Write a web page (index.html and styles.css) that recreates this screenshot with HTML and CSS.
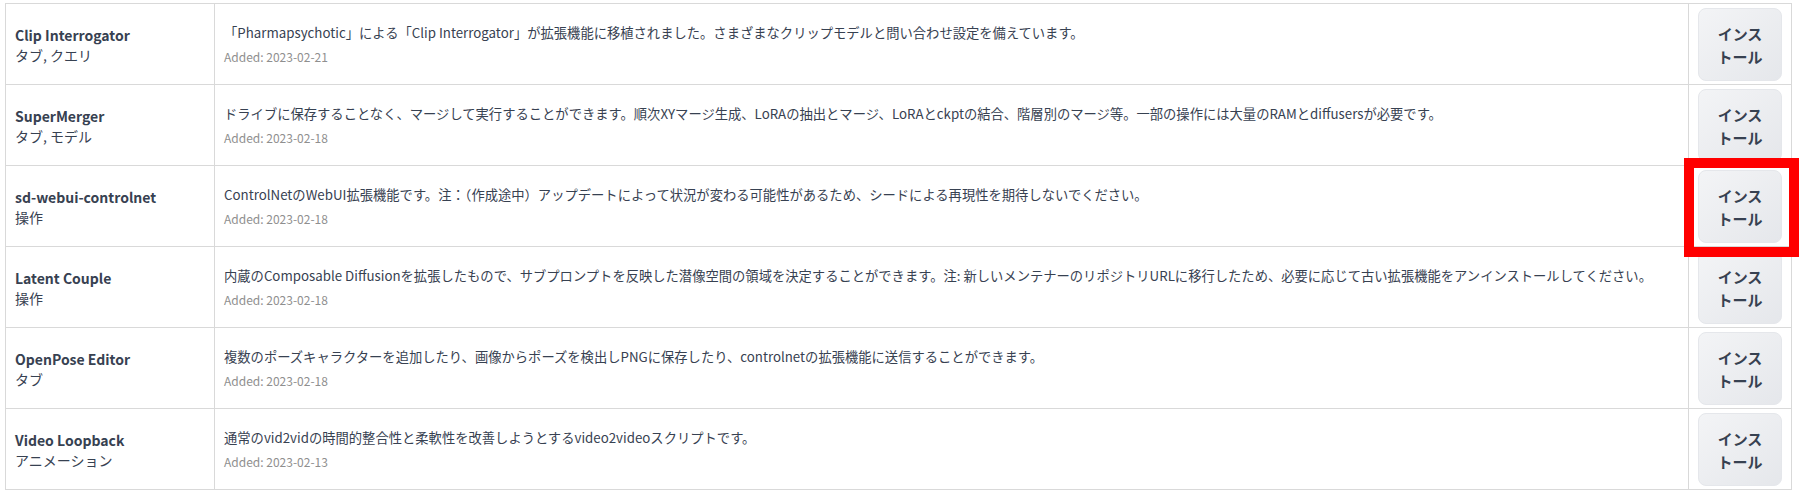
FILE: index.html
```html
<!DOCTYPE html>
<html lang="ja">
<head>
<meta charset="utf-8">
<title>Extensions</title>
<link rel="stylesheet" href="styles.css">
</head>
<body>
<div class="wrap">
<table class="ext-table">
  <colgroup>
    <col class="c-name">
    <col class="c-desc">
    <col class="c-act">
  </colgroup>
  <tbody>
    <tr>
      <td class="name"><div class="title">Clip Interrogator</div><div class="tags">タブ, クエリ</div></td>
      <td class="desc"><div class="text">「Pharmapsychotic」による「Clip Interrogator」が拡張機能に移植されました。さまざまなクリップモデルと問い合わせ設定を備えています。</div><div class="added">Added: 2023-02-21</div></td>
      <td class="act"><button class="btn"><span>インストール</span></button></td>
    </tr>
    <tr>
      <td class="name"><div class="title">SuperMerger</div><div class="tags">タブ, モデル</div></td>
      <td class="desc"><div class="text">ドライブに保存することなく、マージして実行することができます。順次XYマージ生成、LoRAの抽出とマージ、LoRAとckptの結合、階層別のマージ等。一部の操作には大量のRAMとdiffusersが必要です。</div><div class="added">Added: 2023-02-18</div></td>
      <td class="act"><button class="btn"><span>インストール</span></button></td>
    </tr>
    <tr>
      <td class="name"><div class="title">sd-webui-controlnet</div><div class="tags">操作</div></td>
      <td class="desc"><div class="text">ControlNetのWebUI拡張機能です。注：（作成途中）アップデートによって状況が変わる可能性があるため、シードによる再現性を期待しないでください。</div><div class="added">Added: 2023-02-18</div></td>
      <td class="act"><button class="btn"><span>インストール</span></button></td>
    </tr>
    <tr>
      <td class="name"><div class="title">Latent Couple</div><div class="tags">操作</div></td>
      <td class="desc"><div class="text">内蔵のComposable Diffusionを拡張したもので、サブプロンプトを反映した潜像空間の領域を決定することができます。注: 新しいメンテナーのリポジトリURLに移行したため、必要に応じて古い拡張機能をアンインストールしてください。</div><div class="added">Added: 2023-02-18</div></td>
      <td class="act"><button class="btn"><span>インストール</span></button></td>
    </tr>
    <tr>
      <td class="name"><div class="title">OpenPose Editor</div><div class="tags">タブ</div></td>
      <td class="desc"><div class="text">複数のポーズキャラクターを追加したり、画像からポーズを検出しPNGに保存したり、controlnetの拡張機能に送信することができます。</div><div class="added">Added: 2023-02-18</div></td>
      <td class="act"><button class="btn"><span>インストール</span></button></td>
    </tr>
    <tr>
      <td class="name"><div class="title">Video Loopback</div><div class="tags">アニメーション</div></td>
      <td class="desc"><div class="text">通常のvid2vidの時間的整合性と柔軟性を改善しようとするvideo2videoスクリプトです。</div><div class="added">Added: 2023-02-13</div></td>
      <td class="act"><button class="btn"><span>インストール</span></button></td>
    </tr>
  </tbody>
</table>
<div class="highlight"></div>
</div>
</body>
</html>
```

FILE: styles.css
```css
html, body {
  margin: 0;
  padding: 0;
  background: #ffffff;
}
body {
  font-family: "Noto Sans CJK JP", "Noto Sans", sans-serif;
  color: #374151;
}
.wrap {
  position: relative;
  padding: 3px 0 0 5px;
  width: 1794px;
  height: 488px;
  overflow: hidden;
}
.ext-table {
  border-collapse: collapse;
  width: 1787px;
  table-layout: fixed;
}
.c-name { width: 209px; }
.c-act { width: 103px; }
.ext-table td {
  border: 1px solid #d9d9d9;
  vertical-align: middle;
  height: 72px;
  padding: 4px 10px 3px 9px;
}
.name .title {
  font-weight: 700;
  font-size: 14px;
  line-height: 20px;
  color: #374151;
}
.name .tags {
  font-size: 14px;
  line-height: 20px;
  color: #374151;
}
.desc .text {
  font-size: 13.3px;
  line-height: 20px;
  color: #374151;
}
.desc .added {
  font-size: 12px;
  line-height: 20px;
  margin-top: 4px;
  color: #8f8f8f;
}
.ext-table td.act {
  padding: 4px 8px 3px 9px;
}
.btn {
  display: flex;
  align-items: center;
  justify-content: center;
  width: 84px;
  height: 73px;
  border: 1px solid #e5e7eb;
  border-radius: 8px;
  background: linear-gradient(to bottom right, #f3f4f6, #e5e7eb);
  font-family: "Noto Sans CJK JP", sans-serif;
  font-weight: 700;
  font-size: 15px;
  line-height: 23px;
  color: #374151;
  padding: 0;
  cursor: pointer;
}
.btn span {
  display: block;
  width: 48px;
}
.highlight {
  position: absolute;
  left: 1684px;
  top: 158px;
  width: 95px;
  height: 79px;
  border: 10px solid #ff0000;
}
```
